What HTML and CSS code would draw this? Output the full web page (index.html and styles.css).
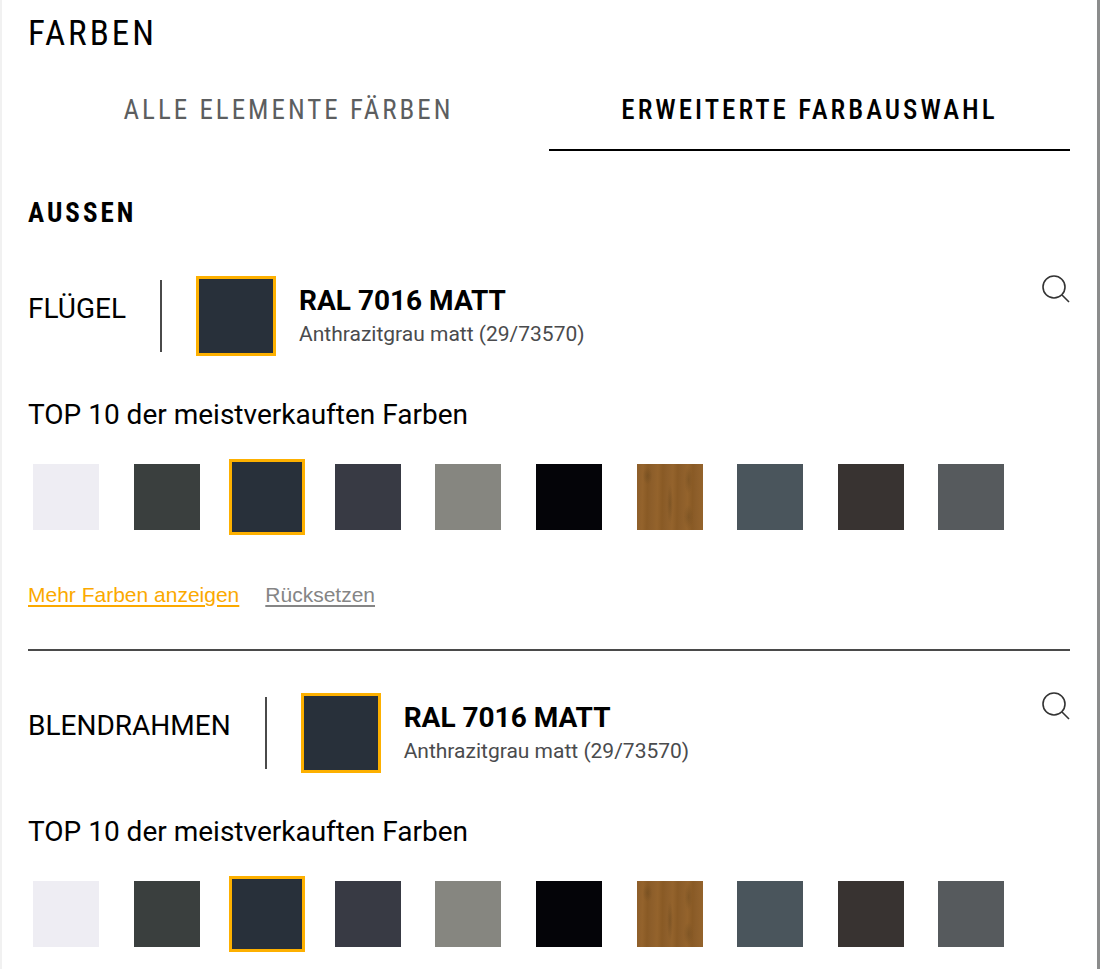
FILE: index.html
```
<!DOCTYPE html>
<html lang="de">
<head>
<meta charset="utf-8">
<title>Farben</title>
<meta name="viewport" content="width=device-width, initial-scale=1">
<link rel="stylesheet" href="styles.css">
</head>
<body>
<main class="panel">
  <h1 class="panel-title">FARBEN</h1>
  <div class="tabs" role="tablist">
    <button class="tab" type="button" role="tab" aria-selected="false">ALLE ELEMENTE FÄRBEN</button>
    <button class="tab tab-active" type="button" role="tab" aria-selected="true">ERWEITERTE FARBAUSWAHL</button>
  </div>
  <h2 class="side-title">AUSSEN</h2>

  <section class="group">
    <header class="group-head">
      <h3 class="part-name">FLÜGEL</h3>
      <span class="rule"></span>
      <span class="current c-7016"></span>
      <div class="current-text">
        <strong class="color-name">RAL 7016 MATT</strong>
        <span class="color-desc">Anthrazitgrau matt (29/73570)</span>
      </div>
      <button class="search" type="button" aria-label="Farbe suchen">
        <svg viewBox="0 0 30 30" width="30" height="30"><circle cx="14" cy="11" r="11"/><path d="M22 19l7 7"/></svg>
      </button>
    </header>
    <fieldset class="top">
      <legend class="top-title">TOP 10 der meistverkauften Farben</legend>
      <div class="swatches">
        <input class="swatch c-white" type="radio" name="fluegel" aria-label="Weiß">
        <input class="swatch c-green" type="radio" name="fluegel" aria-label="Graugrün">
        <input class="swatch c-7016" type="radio" name="fluegel" aria-label="Anthrazitgrau matt" checked>
        <input class="swatch c-slate" type="radio" name="fluegel" aria-label="Schiefergrau">
        <input class="swatch c-grey" type="radio" name="fluegel" aria-label="Betongrau">
        <input class="swatch c-black" type="radio" name="fluegel" aria-label="Schwarz">
        <input class="swatch c-wood" type="radio" name="fluegel" aria-label="Golden Oak">
        <input class="swatch c-blue" type="radio" name="fluegel" aria-label="Blaugrau">
        <input class="swatch c-brown" type="radio" name="fluegel" aria-label="Dunkelbraun">
        <input class="swatch c-basalt" type="radio" name="fluegel" aria-label="Basaltgrau">
      </div>
    </fieldset>
    <nav class="links">
      <a class="more" href="#more">Mehr Farben anzeigen</a>
      <a class="reset" href="#reset">Rücksetzen</a>
    </nav>
  </section>

  <section class="group">
    <header class="group-head">
      <h3 class="part-name">BLENDRAHMEN</h3>
      <span class="rule"></span>
      <span class="current c-7016"></span>
      <div class="current-text">
        <strong class="color-name">RAL 7016 MATT</strong>
        <span class="color-desc">Anthrazitgrau matt (29/73570)</span>
      </div>
      <button class="search" type="button" aria-label="Farbe suchen">
        <svg viewBox="0 0 30 30" width="30" height="30"><circle cx="14" cy="11" r="11"/><path d="M22 19l7 7"/></svg>
      </button>
    </header>
    <fieldset class="top">
      <legend class="top-title">TOP 10 der meistverkauften Farben</legend>
      <div class="swatches">
        <input class="swatch c-white" type="radio" name="rahmen" aria-label="Weiß">
        <input class="swatch c-green" type="radio" name="rahmen" aria-label="Graugrün">
        <input class="swatch c-7016" type="radio" name="rahmen" aria-label="Anthrazitgrau matt" checked>
        <input class="swatch c-slate" type="radio" name="rahmen" aria-label="Schiefergrau">
        <input class="swatch c-grey" type="radio" name="rahmen" aria-label="Betongrau">
        <input class="swatch c-black" type="radio" name="rahmen" aria-label="Schwarz">
        <input class="swatch c-wood" type="radio" name="rahmen" aria-label="Golden Oak">
        <input class="swatch c-blue" type="radio" name="rahmen" aria-label="Blaugrau">
        <input class="swatch c-brown" type="radio" name="rahmen" aria-label="Dunkelbraun">
        <input class="swatch c-basalt" type="radio" name="rahmen" aria-label="Basaltgrau">
      </div>
    </fieldset>
  </section>
</main>
</body>
</html>
```
FILE: styles.css
```
* { box-sizing: border-box; }

body {
  margin: 0;
  background: #fff;
  color: #000;
  font-family: Roboto, "Liberation Sans", sans-serif;
}

.panel {
  min-height: 100vh;
  padding: 14px 27px 16px 26px;
  border-left: 2px solid #f1f1f1;
  border-right: 3px solid #8b8c8c;
}

.panel-title,
.tab,
.side-title {
  font-family: "Roboto Condensed", Roboto, sans-serif;
  letter-spacing: 3px;
}

.panel-title {
  margin: 0;
  font-size: 35px;
  font-weight: 400;
  line-height: 40px;
}

.tabs {
  display: grid;
  grid-template-columns: 1fr 1fr;
  margin-top: 12px;
}

.tab {
  height: 85px;
  padding: 4px 0 0;
  border: 0;
  border-bottom: 2px solid transparent;
  background: none;
  color: #5c5e60;
  font-size: 27px;
  line-height: 32px;
  cursor: pointer;
}

.tab-active {
  border-bottom-color: #000;
  color: #000;
  font-weight: 500;
}

.side-title {
  margin: 46px 0 0;
  font-size: 27px;
  font-weight: 700;
  line-height: 32px;
}

.group {
  padding-top: 42px;
}

.group + .group {
  margin-top: 40px;
  border-top: 2px solid #4a4a4a;
}

.side-title + .group {
  padding-top: 47px;
}

.group-head {
  display: flex;
  align-items: center;
}

.part-name {
  margin: 0 34px 14px 0;
  font-size: 28px;
  font-weight: 400;
  line-height: 32px;
}

.rule {
  width: 2px;
  height: 72px;
  margin-right: 34px;
  background: #4a4a4a;
}

.current {
  width: 80px;
  height: 80px;
  margin-right: 23px;
  border: 3px solid #fdb000;
}

.current-text {
  display: flex;
  flex-direction: column;
  gap: 3px;
}

.color-name {
  font-size: 28px;
  line-height: 32px;
}

.color-desc {
  color: #4a4b4d;
  font-size: 21px;
  line-height: 28px;
}

.search {
  align-self: flex-start;
  width: 30px;
  height: 30px;
  margin-left: auto;
  padding: 0;
  border: 0;
  background: none;
  cursor: pointer;
}

.search svg {
  display: block;
  overflow: visible;
  fill: none;
  stroke: #333;
  stroke-width: 1.6;
}

.top {
  min-width: 0;
  margin: 43px 0 0;
  padding: 0;
  border: 0;
}

.top-title {
  padding: 0;
  font-size: 28px;
  line-height: 32px;
}

.swatches {
  display: grid;
  grid-template-columns: repeat(10, 1fr);
  padding: 28px 36px 0 0;
}

.swatch {
  appearance: none;
  width: 66px;
  height: 66px;
  margin: 5px;
  cursor: pointer;
}

.swatch:checked {
  width: 76px;
  height: 76px;
  margin: 0;
  border: 3px solid #fdb000;
}

.c-white { background: #eeedf3; }
.c-green { background: #3a3f3e; }
.c-7016 { background: #28303a; }
.c-slate { background: #383a44; }
.c-grey { background: #868680; }
.c-black { background: #040408; }
.c-blue { background: #4a555c; }
.c-brown { background: #383331; }
.c-basalt { background: #565a5d; }

.c-wood {
  background:
    radial-gradient(ellipse 5px 9px at 16% 18%, #6d4a1f88, transparent),
    radial-gradient(ellipse 4px 14px at 78% 24%, #6d4a1f77, transparent),
    radial-gradient(ellipse 3px 20px at 50% 60%, #6d4a1f88, transparent),
    radial-gradient(ellipse 5px 12px at 78% 80%, #6d4a1f77, transparent),
    repeating-linear-gradient(91deg, #8d5e2a 0, #94632c 6px, #895a25 11px, #8d5e2a 15px);
}

.links {
  display: flex;
  gap: 26px;
  margin-top: 46px;
  font-family: "Liberation Sans", Arial, sans-serif;
  font-size: 21px;
  line-height: 28px;
}

.links a {
  text-underline-offset: 3px;
}

.more { color: #fba900; }
.reset { color: #858585; }
```
